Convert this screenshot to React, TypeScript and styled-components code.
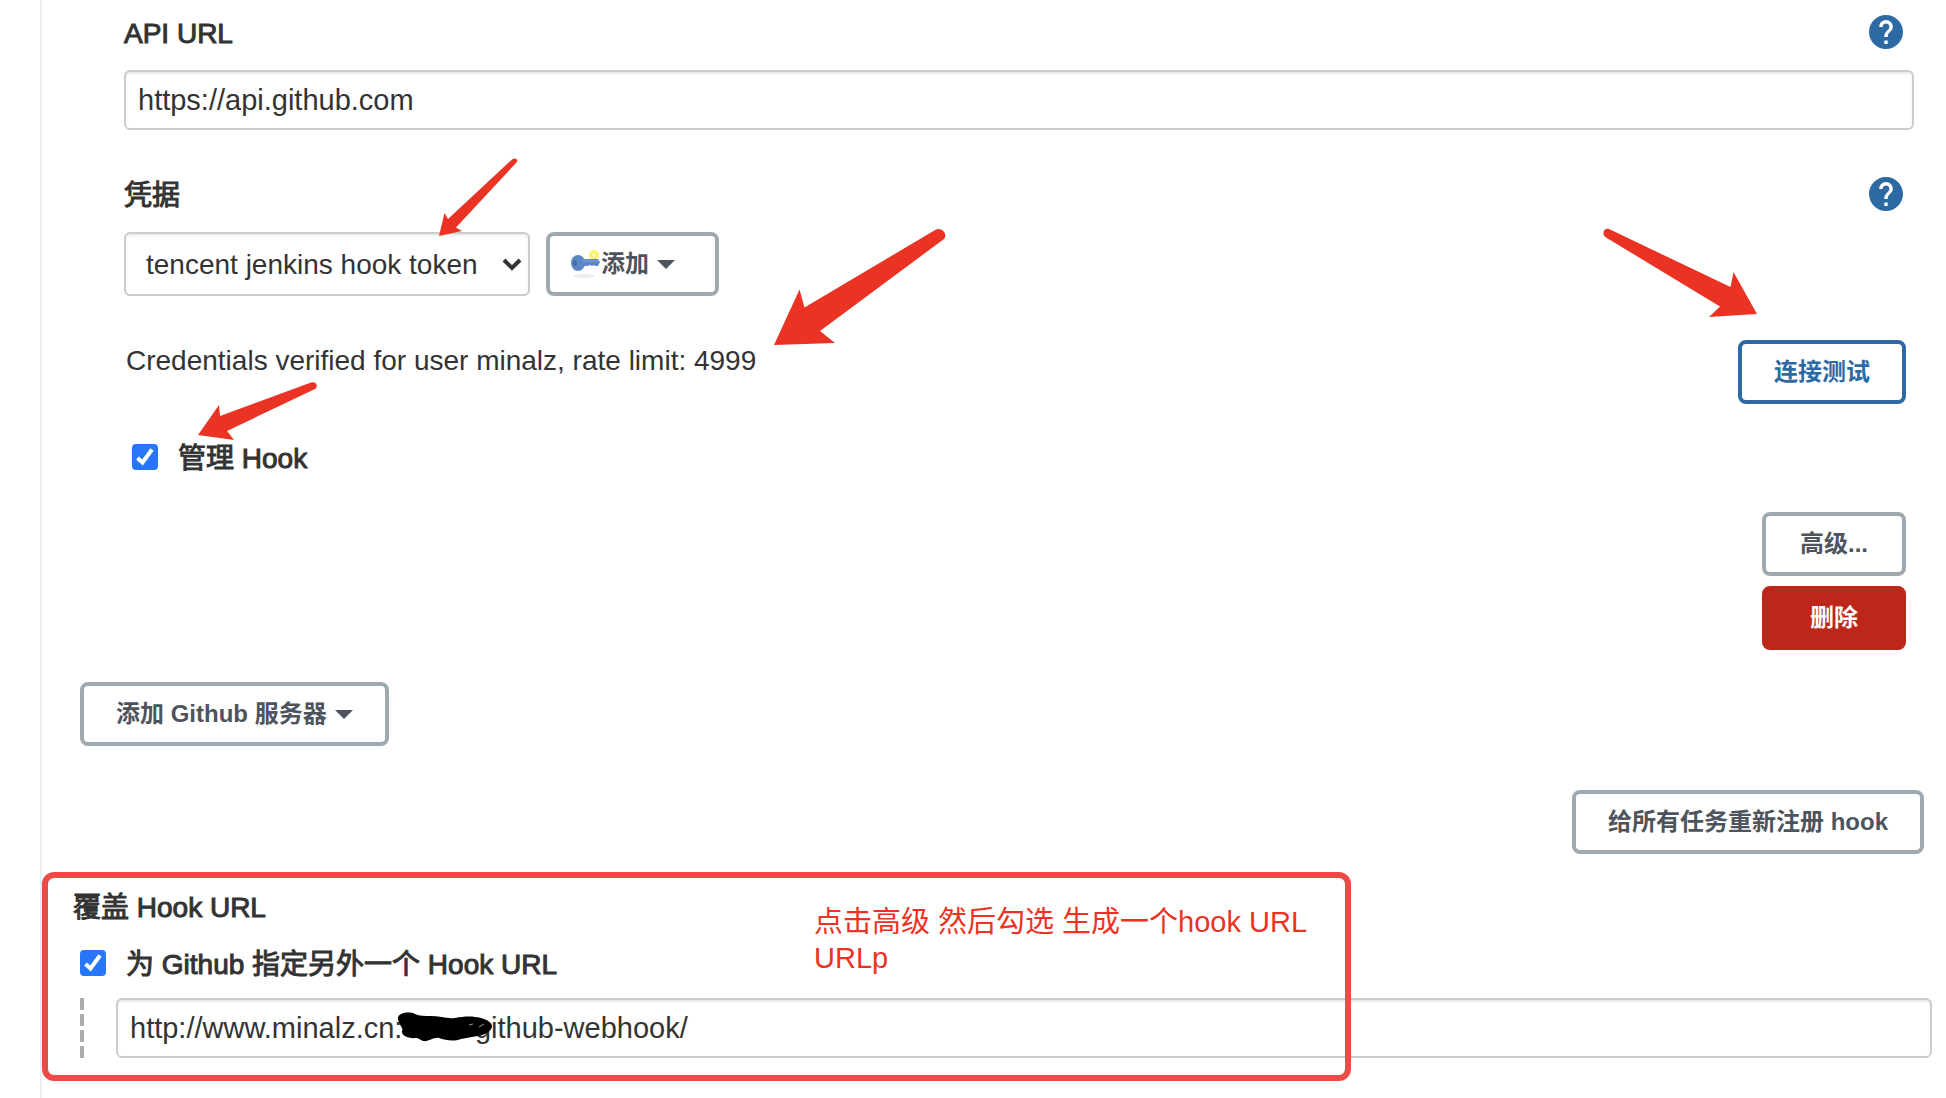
import React from "react";
import styled, { createGlobalStyle } from "styled-components";

const GlobalStyle = createGlobalStyle`
  *, *::before, *::after { box-sizing: border-box; }
  body {
    margin: 0;
    background: #fff;
    color: #333;
    font-family: "Liberation Sans", "Noto Sans CJK SC", sans-serif;
    font-size: 29px;
  }
  button, input, select { font: inherit; color: inherit; margin: 0; }
`;

const Page = styled.div`
  display: flex;
  min-height: 100vh;
  padding-left: 40px;
`;

const Panel = styled.main`
  position: relative;
  flex: 1;
  min-width: 0;
  border-left: 2px solid #e9eef2;
  padding: 14px 14px 40px 0;
`;

const Server = styled.section`
  display: flex;
  flex-direction: column;
  padding: 0 18px 0 82px;
`;

const Field = styled.div`
  display: flex;
  flex-direction: column;
  gap: 20px;
  margin-bottom: 46px;
`;

const CredentialField = styled(Field)`
  margin-bottom: 44px;
`;

const LabelRow = styled.div`
  display: flex;
  align-items: flex-end;
  justify-content: space-between;
  height: 36px;
  padding-right: 11px;
`;

const Label = styled.label`
  font-size: 28px;
  font-weight: 400;
  line-height: 32px;
  -webkit-text-stroke: 1px currentColor;
`;

const Heading = styled(Label).attrs({ as: "h2" })`
  margin: 0;
`;

const HelpLink = styled.a`
  display: block;
  align-self: center;
  width: 34px;
  height: 34px;
  svg { display: block; }
`;

const TextInput = styled.input`
  width: 100%;
  min-width: 0;
  height: 60px;
  padding: 0 12px;
  border: 2px solid #ccc;
  border-radius: 6px;
  background: #fff;
  box-shadow: inset 0 2px 2px rgba(0, 0, 0, 0.08);
`;

const Controls = styled.div`
  display: flex;
  gap: 16px;
`;

const SelectBox = styled.div`
  position: relative;
  width: 406px;
`;

const Select = styled.select`
  appearance: none;
  width: 100%;
  height: 64px;
  padding: 0 40px 0 20px;
  border: 2px solid #ccc;
  border-radius: 6px;
  background: #fff;
  font-size: 28px;
  box-shadow: inset 0 2px 2px rgba(0, 0, 0, 0.08);
`;

const Chevron = styled.svg`
  position: absolute;
  right: 8px;
  top: 26px;
  pointer-events: none;
`;

const tones = {
  plain: { line: "#9ea9b0", fill: "#fff", ink: "#4d545d" },
  primary: { line: "#2d6aa3", fill: "#fff", ink: "#2d6aa3" },
  danger: { line: "#bd261b", fill: "#bd261b", ink: "#fff" },
};

const Button = styled.button<{ $tone?: keyof typeof tones }>`
  display: flex;
  align-items: center;
  justify-content: center;
  min-width: 144px;
  height: 64px;
  padding: 0 32px;
  border: 4px solid ${(p) => tones[p.$tone ?? "plain"].line};
  border-radius: 8px;
  background: ${(p) => tones[p.$tone ?? "plain"].fill};
  color: ${(p) => tones[p.$tone ?? "plain"].ink};
  font-size: 24px;
  font-weight: 700;
  line-height: 32px;
  white-space: nowrap;
`;

const AddButton = styled(Button)`
  padding: 0 40px 0 20px;
`;

const Caret = styled.span`
  margin-left: 8px;
  border: 9px solid transparent;
  border-top-color: currentColor;
  border-bottom: 0;
`;

const Validation = styled.div`
  display: flex;
  justify-content: space-between;
  align-items: flex-start;
  padding: 0 8px 0 2px;
`;

const Message = styled.p`
  margin: 0;
  font-size: 28px;
  line-height: 42px;
`;

const CheckRow = styled.div`
  display: flex;
  align-items: flex-end;
  gap: 20px;
  height: 36px;
`;

const ManageRow = styled(CheckRow)`
  margin-top: 35px;
  padding-left: 8px;
`;

const CheckBox = styled.span`
  position: relative;
  display: block;
  align-self: center;
  width: 26px;
  height: 26px;
  svg { position: absolute; inset: 0; pointer-events: none; }
`;

const CheckInput = styled.input`
  appearance: none;
  display: block;
  width: 26px;
  height: 26px;
  border-radius: 4px;
  border: 2px solid #767676;
  &:checked { border-color: #2876f9; background: #2876f9; }
  &:not(:checked) + svg { display: none; }
`;

const Actions = styled.div`
  display: flex;
  flex-direction: column;
  align-items: flex-end;
  gap: 10px;
  margin-top: 37px;
  padding-right: 8px;
`;

const AddServerRow = styled.div`
  display: flex;
  margin-top: 32px;
  padding-left: 38px;
`;

const RegisterRow = styled.div`
  display: flex;
  justify-content: flex-end;
  margin-top: 44px;
  padding-right: 8px;
`;

const HookSection = styled.section`
  position: relative;
  display: flex;
  flex-direction: column;
  margin-top: 18px;
  padding: 20px 0 0 31px;
`;

const OverrideRow = styled(CheckRow)`
  margin-top: 21px;
  padding-left: 7px;
`;

const UrlRow = styled.div`
  position: relative;
  display: flex;
  gap: 32px;
  margin-top: 17px;
  padding-left: 7px;
`;

const DashedRule = styled.span`
  flex: none;
  width: 4px;
  background: repeating-linear-gradient(#adadad 0 12px, transparent 12px 16px);
`;

const Frame = styled.div`
  position: absolute;
  top: 0;
  left: 0;
  width: 1309px;
  height: 209px;
  border: 6px solid #ee4a48;
  border-radius: 12px;
  pointer-events: none;
`;

const Note = styled.p`
  position: absolute;
  top: 32px;
  left: 772px;
  width: 500px;
  margin: 0;
  color: #ec3323;
  line-height: 36px;
`;

const Scribble = styled.svg`
  position: absolute;
  left: 324px;
  top: 14px;
  pointer-events: none;
`;

const ArrowSvg = styled.svg<{ $x: number; $y: number; $fromRight?: boolean }>`
  position: absolute;
  ${(p) => (p.$fromRight ? "right" : "left")}: ${(p) => p.$x}px;
  top: ${(p) => p.$y}px;
  fill: #eb3323;
  overflow: visible;
  pointer-events: none;
`;

type ArrowProps = { x: number; y: number; w: number; h: number; d: string; fromRight?: boolean };

const Arrow = ({ x, y, w, h, d, fromRight }: ArrowProps) => (
  <ArrowSvg $x={x} $y={y} $fromRight={fromRight} width={w} height={h} viewBox={`0 0 ${w} ${h}`} aria-hidden="true">
    <path d={d} />
  </ArrowSvg>
);

const Help = ({ topic }: { topic: string }) => (
  <HelpLink href="#" aria-label={topic}>
    <svg width="34" height="34" viewBox="2 2 20 20" aria-hidden="true">
      <path
        fill="#2d6aa3"
        stroke="none"
        d="M12 2C6.48 2 2 6.48 2 12s4.48 10 10 10 10-4.48 10-10S17.52 2 12 2zm1 17h-2v-2h2v2zm2.07-7.75l-.9.92C13.45 12.9 13 13.5 13 15h-2v-.5c0-1.1.45-2.1 1.17-2.83l1.24-1.26c.37-.36.59-.86.59-1.41 0-1.1-.9-2-2-2s-2 .9-2 2H8c0-2.21 1.79-4 4-4s4 1.79 4 4c0 .88-.36 1.68-.93 2.25z"
      />
    </svg>
  </HelpLink>
);

const Check = ({ id }: { id: string }) => (
  <CheckBox>
    <CheckInput id={id} type="checkbox" defaultChecked />
    <svg width="26" height="26" viewBox="0 0 26 26" aria-hidden="true">
      <path d="M5.5 14L10.5 18.500L20 5.500" fill="none" stroke="#fff" strokeWidth="4" />
    </svg>
  </CheckBox>
);

const KeyIcon = () => (
  <svg width="31" height="32" viewBox="0 0 31 32" aria-hidden="true">
    <ellipse cx="14" cy="28" rx="11" ry="2" fill="#000" opacity="0.08" />
    <circle cx="24" cy="7" r="5" fill="#fbf36b" />
    <circle cx="24" cy="7" r="2" fill="#fdfab4" />
    <path d="M12 11h16l2 3-2 4h-3l-1-1-2 1-2-1-3 1h-5z" fill="#5b87c7" />
    <ellipse cx="8" cy="15" rx="7" ry="8" fill="#5b87c7" />
    <path d="M13 13h15" stroke="#86a8da" strokeWidth="1" />
    <ellipse cx="5" cy="15" rx="2" ry="3" fill="#456a9e" />
  </svg>
);

export default function App() {
  return (
    <Page>
      <GlobalStyle />
      <Panel>
        <Server>
          <Field>
            <LabelRow>
              <Label htmlFor="api-url">API URL</Label>
              <Help topic="API URL" />
            </LabelRow>
            <TextInput id="api-url" type="text" defaultValue="https://api.github.com" />
          </Field>
          <CredentialField>
            <LabelRow>
              <Label htmlFor="credential">凭据</Label>
              <Help topic="凭据" />
            </LabelRow>
            <Controls>
              <SelectBox>
                <Select id="credential" defaultValue="token">
                  <option value="token">tencent jenkins hook token</option>
                </Select>
                <Chevron width="20" height="14" viewBox="0 0 20 14" aria-hidden="true">
                  <path d="M2 2l8 8 8-8" fill="none" stroke="#333" strokeWidth="4" />
                </Chevron>
              </SelectBox>
              <AddButton type="button">
                <KeyIcon />
                添加
                <Caret />
              </AddButton>
            </Controls>
          </CredentialField>
          <Validation>
            <Message>Credentials verified for user minalz, rate limit: 4999</Message>
            <Button type="button" $tone="primary">连接测试</Button>
          </Validation>
          <ManageRow>
            <Check id="manage-hook" />
            <Label htmlFor="manage-hook">管理 Hook</Label>
          </ManageRow>
          <Actions>
            <Button type="button">高级...</Button>
            <Button type="button" $tone="danger">删除</Button>
          </Actions>
        </Server>
        <AddServerRow>
          <Button type="button">
            添加 Github 服务器
            <Caret />
          </Button>
        </AddServerRow>
        <RegisterRow>
          <Button type="button">给所有任务重新注册 hook</Button>
        </RegisterRow>
        <HookSection>
          <Heading>覆盖 Hook URL</Heading>
          <OverrideRow>
            <Check id="override-hook" />
            <Label htmlFor="override-hook">为 Github 指定另外一个 Hook URL</Label>
          </OverrideRow>
          <UrlRow>
            <DashedRule />
            <TextInput
              type="text"
              aria-label="Hook URL"
              defaultValue={"http://www.minalz.cn:" + " ".repeat(9) + "github-webhook/"}
            />
            <Scribble width="96" height="30" viewBox="0 0 96 30" aria-hidden="true">
              <path d="M1 7C0 1 12-1 18 2C22 4 28 4 34 4C44 4 50 7 58 6C68 4 76 4 84 6C91 8 95 11 95 14C95 19 88 23 81 24C74 25 70 26 64 27C56 30 48 28 42 26C36 25 32 30 26 29C23 28 22 26 19 26C11 27 4 23 5 19C7 17 2 13 1 7Z" />
              <path d="M72 13l4-1M82 15l5-3" stroke="#999" strokeWidth="1" />
            </Scribble>
          </UrlRow>
          <Frame />
          <Note>点击高级 然后勾选 生成一个hook URL URLp</Note>
        </HookSection>
        <Arrow x={397} y={158} w={79} h={78} d="M0 78L5.500 55L9 61L73 1.500Q76-.5 78 1.500Q79 3 77 5L17 69.500L23 73Z" />
        <Arrow x={732} y={228} w={172} h={117} d="M0 117L25.500 61.500L30.500 79.500L162 1.500C168-1 174 6 170 11L46 103L61 115Z" />
        <Arrow x={189} y={228} w={154} h={89} fromRight d="M154 86L130.500 44L127.500 59L6 1C1-1-2 6 3 9.500L117 78.500L106 89Z" />
        <Arrow x={156} y={382} w={119} h={58} d="M0 53L21 23L22 34L113 .5C118-1 121 4 117 7L29 49L36 58Z" />
      </Panel>
    </Page>
  );
}
